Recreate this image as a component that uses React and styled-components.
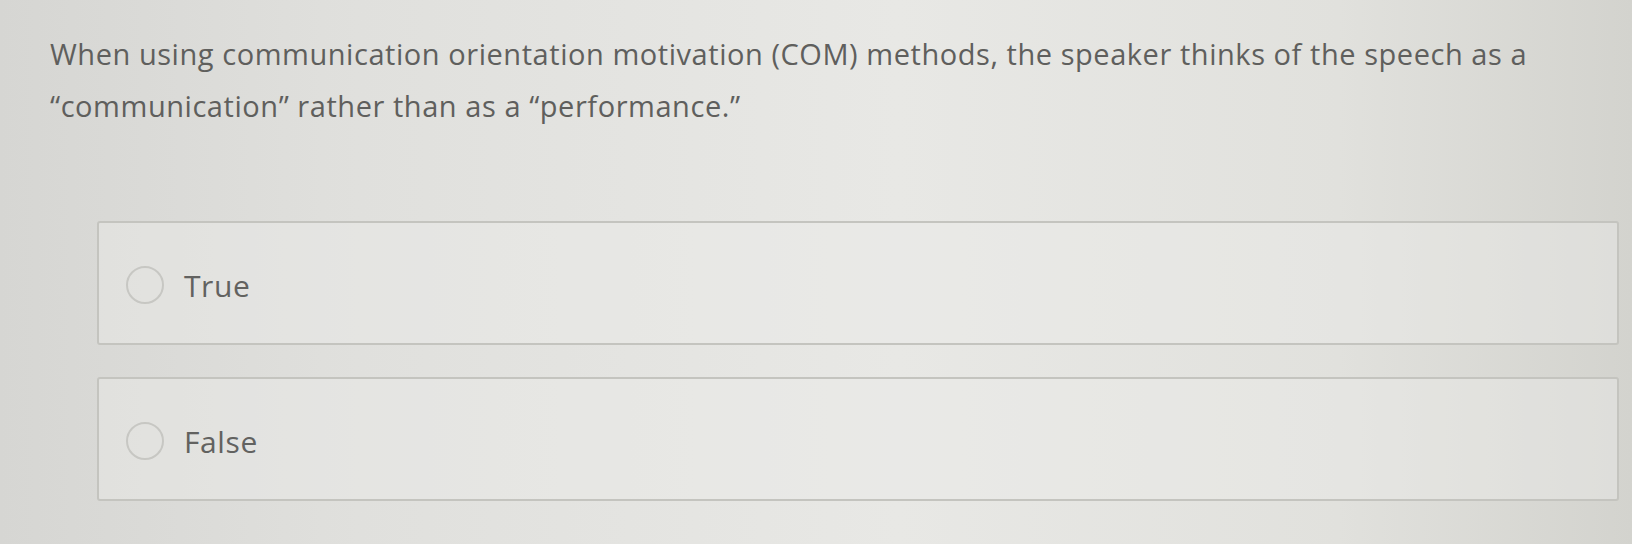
import styled, { createGlobalStyle } from 'styled-components';

const GlobalStyle = createGlobalStyle`
  html, body {
    margin: 0;
    padding: 0;
  }
  body {
    width: 1632px;
    height: 544px;
    overflow: hidden;
    background: linear-gradient(90deg, #d6d6d3 0%, #e0e0dd 22%, #e8e8e5 55%, #e1e1dd 82%, #d3d3ce 100%);
    font-family: "Open Sans", "Noto Sans", sans-serif;
  }
`;

const Page = styled.div`
  padding: 28px 12px 0 50px;
`;

const Question = styled.p`
  margin: 0;
  font-size: 29px;
  letter-spacing: 0.55px;
  line-height: 52px;
  color: #5f5f5d;
  max-width: 1500px;
`;

const Options = styled.div`
  display: flex;
  flex-direction: column;
  gap: 32px;
  margin: 89px 0 0 47px;
  width: 1522px;
`;

const Option = styled.label`
  display: flex;
  align-items: center;
  gap: 20px;
  height: 124px;
  padding: 4px 0 0 27px;
  box-sizing: border-box;
  border: 2px solid #c4c4bf;
  border-radius: 3px;
  background: rgba(236, 236, 232, 0.45);
  cursor: pointer;
`;

const Radio = styled.span`
  width: 38px;
  height: 38px;
  border-radius: 50%;
  border: 2px solid #c7c7c3;
  box-sizing: border-box;
  flex-shrink: 0;
`;

const OptionText = styled.span`
  font-size: 30px;
  letter-spacing: 0.6px;
  color: #626260;
`;

const answers = ['True', 'False'];

export default function App() {
  return (
    <>
      <GlobalStyle />
      <Page>
        <Question>
          When using communication orientation motivation (COM) methods, the speaker thinks of the speech as a
          “communication” rather than as a “performance.”
        </Question>
        <Options>
          {answers.map((a) => (
            <Option key={a}>
              <Radio />
              <OptionText>{a}</OptionText>
            </Option>
          ))}
        </Options>
      </Page>
    </>
  );
}
